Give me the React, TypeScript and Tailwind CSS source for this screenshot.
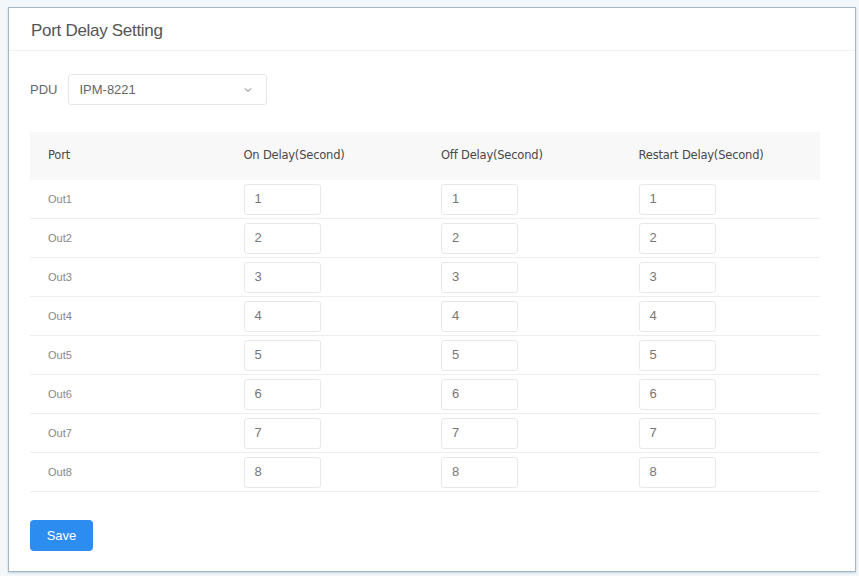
import React from 'react';

const ports = [1, 2, 3, 4, 5, 6, 7, 8];

const DelayInput: React.FC<{ value: number }> = ({ value }) => (
  <div className="w-[77px] h-[31px] border border-[#e6e8ec] rounded-[3px] bg-white flex items-center px-[10px] text-[13px] text-[#777]">
    {value}
  </div>
);

const App: React.FC = () => {
  return (
    <div className="w-[859px] h-[576px] bg-[#f3f7fa] pt-[7px] pl-[8px] font-['Liberation_Sans',sans-serif]">
      <div className="w-[848px] h-[565px] bg-white border border-[#a9b6c3] shadow-[0_1px_2px_#b9cfe0]">
        <div className="h-[43px] border-b border-[#f0f2f4] px-[22px] pt-[3px] flex items-center">
          <h1 className="text-[17px] text-[#555] tracking-[-0.3px]">Port Delay Setting</h1>
        </div>

        <div className="px-[21px]">
          <div className="flex items-center mt-[23px] gap-[11px]">
            <span className="text-[13px] text-[#666]">PDU</span>
            <div className="w-[199px] h-[31px] border border-[#e4e7ec] rounded-[3px] flex items-center justify-between px-[10px]">
              <span className="text-[13px] text-[#666]">IPM-8221</span>
              <svg width="10" height="10" viewBox="0 0 10 10" className="mr-[3px]">
                <path d="M2 3.5 L5 6.5 L8 3.5" fill="none" stroke="#aaa" strokeWidth="1.1" />
              </svg>
            </div>
          </div>

          <div className="mt-[27px] w-[790px]">
            <div className="grid grid-cols-4 h-[48px] bg-[#f8f8f9] items-center text-[11.5px] text-[#484848] font-['DejaVu_Sans',sans-serif] tracking-[-0.2px]">
              <div className="pl-[18px]">Port</div>
              <div className="pl-[16px]">On Delay(Second)</div>
              <div className="pl-[16px]">Off Delay(Second)</div>
              <div className="pl-[16px]">Restart Delay(Second)</div>
            </div>
            {ports.map((p) => (
              <div key={p} className="grid grid-cols-4 h-[39px] items-center border-b border-[#eceef1]">
                <div className="pl-[18px] text-[11px] text-[#888]">Out{p}</div>
                <div className="pl-[16px]"><DelayInput value={p} /></div>
                <div className="pl-[16px]"><DelayInput value={p} /></div>
                <div className="pl-[16px]"><DelayInput value={p} /></div>
              </div>
            ))}
          </div>

          <button className="mt-[28px] w-[63px] h-[31px] rounded-[4px] bg-[#2d8cf0] text-white text-[13px]">
            Save
          </button>
        </div>
      </div>
    </div>
  );
};

export default App;
